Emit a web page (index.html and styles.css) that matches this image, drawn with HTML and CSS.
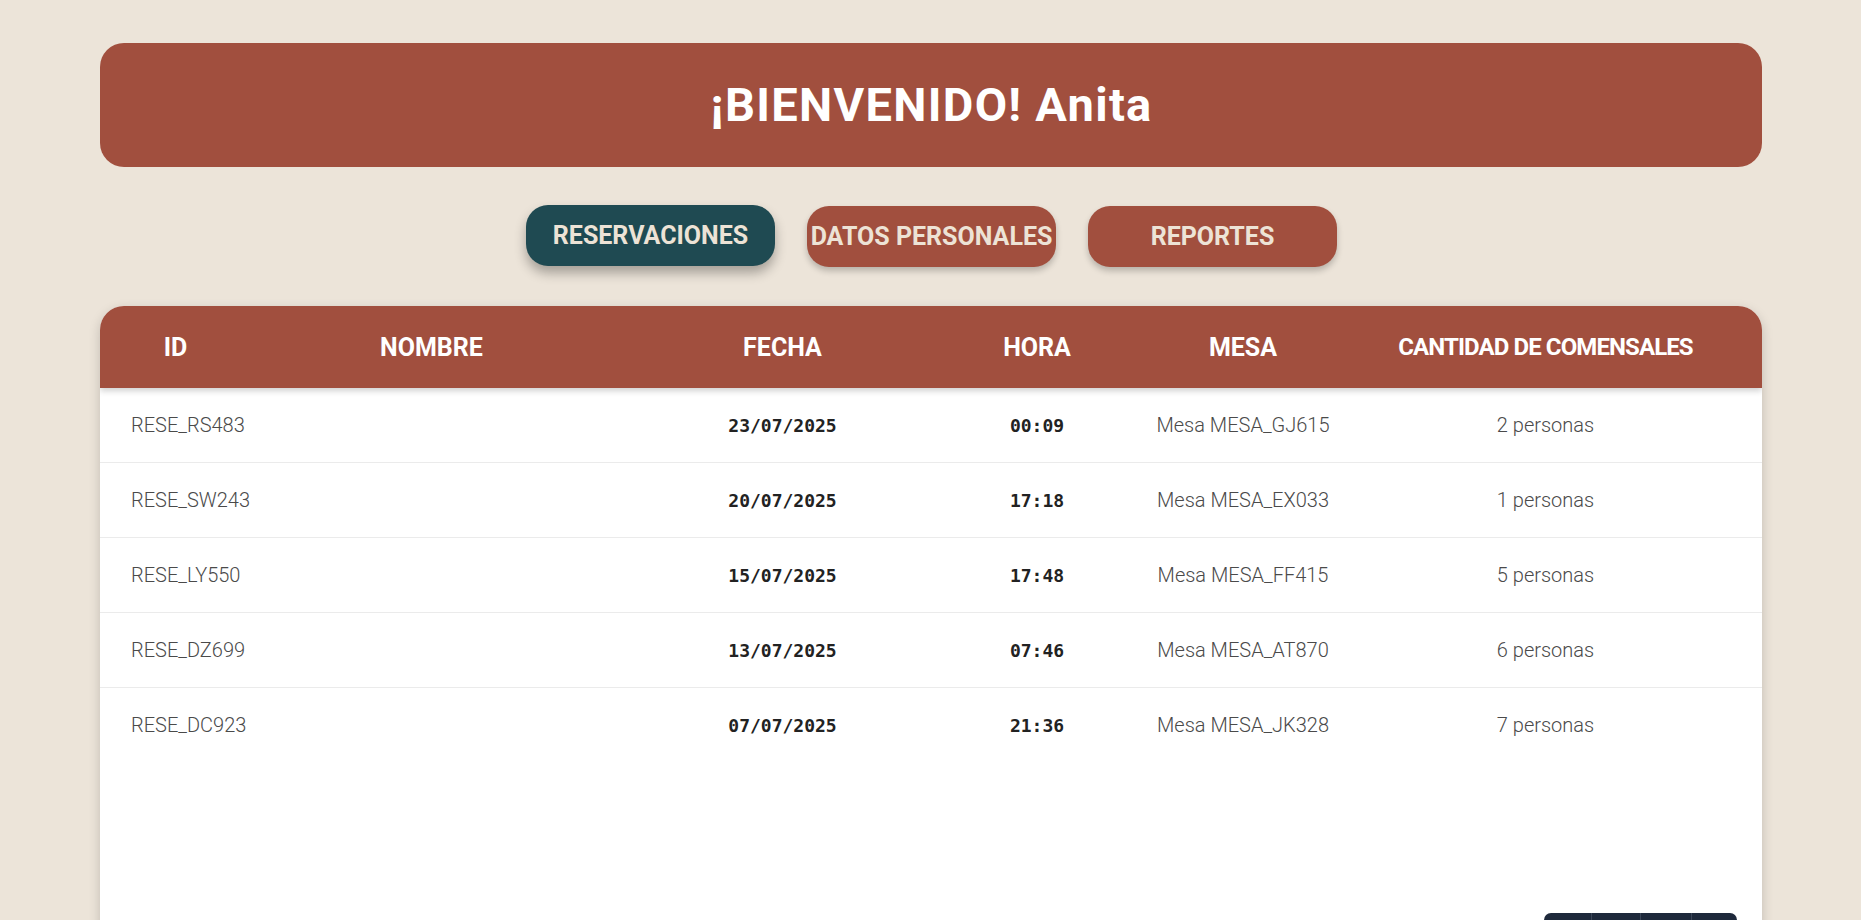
FILE: index.html
```html
<!DOCTYPE html>
<html lang="es">
<head>
<meta charset="utf-8">
<title>Reservaciones</title>
<link rel="stylesheet" href="styles.css">
</head>
<body>
<div class="page">
  <header class="welcome">
    <h1>¡BIENVENIDO! Anita</h1>
  </header>

  <nav class="tabs">
    <button class="tab active">RESERVACIONES</button>
    <button class="tab">DATOS PERSONALES</button>
    <button class="tab">REPORTES</button>
  </nav>

  <section class="card">
    <div class="grid thead">
      <div class="th">ID</div>
      <div class="th">NOMBRE</div>
      <div class="th">FECHA</div>
      <div class="th">HORA</div>
      <div class="th">MESA</div>
      <div class="th long">CANTIDAD DE COMENSALES</div>
      <div class="th"></div>
    </div>
    <div class="tbody">
      <div class="grid row">
        <div class="td id">RESE_RS483</div><div class="td"></div>
        <div class="td mono">23/07/2025</div><div class="td mono">00:09</div>
        <div class="td">Mesa MESA_GJ615</div><div class="td">2 personas</div><div class="td"></div>
      </div>
      <div class="grid row">
        <div class="td id">RESE_SW243</div><div class="td"></div>
        <div class="td mono">20/07/2025</div><div class="td mono">17:18</div>
        <div class="td">Mesa MESA_EX033</div><div class="td">1 personas</div><div class="td"></div>
      </div>
      <div class="grid row">
        <div class="td id">RESE_LY550</div><div class="td"></div>
        <div class="td mono">15/07/2025</div><div class="td mono">17:48</div>
        <div class="td">Mesa MESA_FF415</div><div class="td">5 personas</div><div class="td"></div>
      </div>
      <div class="grid row">
        <div class="td id">RESE_DZ699</div><div class="td"></div>
        <div class="td mono">13/07/2025</div><div class="td mono">07:46</div>
        <div class="td">Mesa MESA_AT870</div><div class="td">6 personas</div><div class="td"></div>
      </div>
      <div class="grid row">
        <div class="td id">RESE_DC923</div><div class="td"></div>
        <div class="td mono">07/07/2025</div><div class="td mono">21:36</div>
        <div class="td">Mesa MESA_JK328</div><div class="td">7 personas</div><div class="td"></div>
      </div>
    </div>
    <div class="pager-wrap">
      <div class="pager">
        <span class="pg p1"></span>
        <span class="pg p2"></span>
        <span class="pg p3"></span>
        <span class="pg p4"></span>
      </div>
    </div>
  </section>
</div>
</body>
</html>
```
FILE: styles.css
```css
html {
  overflow: hidden;
}
body {
  margin: 0;
  background: #ece4d9;
  font-family: Roboto, "Liberation Sans", sans-serif;
}
.page {
  padding: 43px 99px 0 100px;
  display: flex;
  flex-direction: column;
  gap: 39px;
}
.welcome {
  background: #a14f3e;
  border-radius: 24px;
  height: 124px;
  display: flex;
  align-items: center;
  justify-content: center;
}
.welcome h1 {
  margin: 0;
  padding-left: 1px;
  color: #ffffff;
  font-size: 47px;
  font-weight: 700;
  letter-spacing: 1.3px;
  line-height: 54px;
}
.tabs {
  display: flex;
  justify-content: center;
  gap: 32px;
  height: 61px;
  padding-left: 1px;
}
.tab {
  width: 249px;
  height: 61px;
  border: none;
  border-radius: 22px;
  background: #a14f3e;
  color: #ede3d6;
  font-family: Roboto, "Liberation Sans", sans-serif;
  font-size: 25px;
  font-weight: 700;
  padding: 0;
  white-space: nowrap;
  box-shadow: 0 4px 6px rgba(0, 0, 0, 0.22);
}
.tab.active {
  background: #1f4a52;
  transform: translateY(-1px);
  box-shadow: 0 7px 12px rgba(0, 0, 0, 0.3);
}
.card {
  background: #ffffff;
  border-radius: 24px 24px 0 0;
  overflow: hidden;
  box-shadow: 0 4px 12px rgba(0, 0, 0, 0.18);
  min-height: 700px;
}
.grid {
  display: grid;
  grid-template-columns: 151px 361px 341px 168px 244px 361px 1fr;
}
.thead {
  background: #a14f3e;
  height: 82px;
  position: relative;
  z-index: 1;
  box-shadow: 0 3px 6px rgba(0, 0, 0, 0.18);
}
.th {
  color: #ffffff;
  font-size: 25px;
  font-weight: 700;
  display: flex;
  align-items: center;
  justify-content: center;
  white-space: nowrap;
}
.th.long {
  font-size: 24px;
  letter-spacing: -0.9px;
}
.tbody {
  min-height: 525px;
}
.row {
  height: 74px;
  border-bottom: 1px solid #ebebeb;
}
.row:last-child {
  border-bottom: none;
}
.td {
  display: flex;
  align-items: center;
  justify-content: center;
  font-size: 20px;
  font-weight: 300;
  color: #4a4a4a;
  white-space: nowrap;
}
.td.id {
  justify-content: flex-start;
  padding-left: 31px;
}
.td.mono {
  font-family: "DejaVu Sans Mono", monospace;
  font-size: 18px;
  font-weight: 700;
  color: #222222;
}
.pager-wrap {
  display: flex;
  justify-content: flex-end;
  padding-right: 25px;
}
.pager {
  display: flex;
  background: #1e293b;
  border-radius: 7px;
  overflow: hidden;
  height: 40px;
}
.pg {
  border-left: 1px solid #3b4658;
}
.pg.p1 { width: 47px; border-left: none; }
.pg.p2 { width: 48px; }
.pg.p3 { width: 50px; }
.pg.p4 { width: 45px; }
```
